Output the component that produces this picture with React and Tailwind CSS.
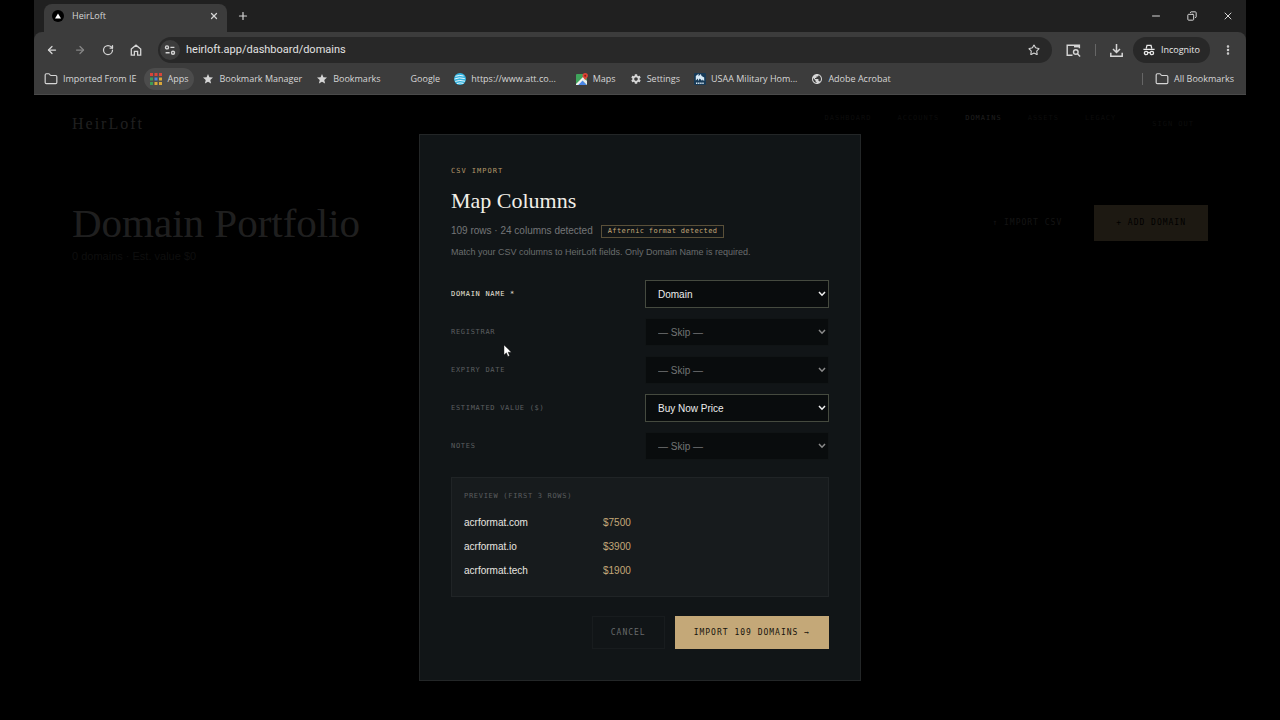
import React, { useState } from 'react';
import {
  ArrowLeft, ArrowRight, RotateCw, Star, Folder, Plus, X, Minus, EllipsisVertical, Copy
} from 'lucide-react';
import { MdStar, MdSettings, MdPublic } from 'react-icons/md';

const navLinks = ['Dashboard', 'Accounts', 'Domains', 'Assets', 'Legacy'];

const fields = [
  { id: 'domain', label: 'Domain Name *', value: 'Domain', required: true },
  { id: 'registrar', label: 'Registrar', value: '' },
  { id: 'expiry', label: 'Expiry Date', value: '' },
  { id: 'value', label: 'Estimated Value ($)', value: 'Buy Now Price' },
  { id: 'notes', label: 'Notes', value: '' }
];

const columns = ['Domain', 'Buy Now Price', 'Floor Price', 'Min Offer'];

const previewRows = [
  { domain: 'acrformat.com', price: '$7500' },
  { domain: 'acrformat.io', price: '$3900' },
  { domain: 'acrformat.tech', price: '$1900' }
];

function HomeIcon() {
  return (
    <svg viewBox="0 0 12 12" className="h-3 w-3" fill="none" stroke="currentColor" strokeWidth="1.3">
      <path d="M1.3 5 6 1.2 10.7 5v6.2H7.6V7.4H4.4v3.8H1.3Z" />
    </svg>
  );
}

function TuneIcon() {
  return (
    <svg viewBox="0 0 12 12" className="h-3 w-3" fill="none" stroke="currentColor" strokeWidth="1.4">
      <circle cx="3" cy="3.4" r="1.5" />
      <path d="M6.4 3.4h4M1.6 8.8h4" />
      <circle cx="9" cy="8.8" r="1.5" />
    </svg>
  );
}

function AppsIcon() {
  return (
    <svg viewBox="0 0 12 12" className="h-3 w-3">
      <path fill="#d9453a" d="M0 0h3v3H0zM4.5 0h3v3h-3zM9 0h3v3H9z" />
      <path fill="#3c9b58" d="M0 4.5h3v3H0zM0 9h3v3H0z" />
      <path fill="#4a85dd" d="M4.5 4.5h3v3h-3z" />
      <path fill="#d9a73a" d="M9 4.5h3v3H9zM4.5 9h3v3h-3zM9 9h3v3H9z" />
    </svg>
  );
}

function AttIcon() {
  return (
    <svg viewBox="0 0 12 12" className="h-3 w-3">
      <circle cx="6" cy="6" r="6" fill="#35b4e0" />
      <path d="M1.4 3.3Q6 1.6 9.6 3M.6 6Q5 3.9 10.8 5.6M1.2 8.4Q5.4 6.6 11 8.2M3 10.5Q6 9.4 9.4 10.4" fill="none" stroke="#e6f7fd" strokeWidth="1" />
    </svg>
  );
}

function MapsIcon() {
  return (
    <svg viewBox="0 0 12 12" className="h-3 w-3">
      <rect y="1" width="11" height="11" rx="1" fill="#3fa45b" />
      <path d="M5.5 6.5 11 12H0Z" fill="#4a86e8" />
      <path d="M0 11 8 3l1.6 1.6L2.2 12H0Z" fill="#f1f1f1" />
      <path d="m6 7 5 5V8L8.4 5.4Z" fill="#e8eaed" />
      <path d="M9.2 0a2.7 2.7 0 0 1 2.7 2.7c0 1.8-2 2.4-2.7 4.6-.7-2.2-2.7-2.8-2.7-4.6A2.7 2.7 0 0 1 9.2 0Z" fill="#dd4335" />
      <circle cx="9.2" cy="2.7" r="1" fill="#8c1f17" />
    </svg>
  );
}

function UsaaIcon() {
  return (
    <svg viewBox="0 0 12 12" className="h-3 w-3">
      <rect width="12" height="12" rx="1" fill="#173a57" />
      <path d="M1.8 7.6V3L4.6.8v2.4L6.8 1l.8 2L10.2 4.6V8L8.2 6.4V8L5.8 5.4 4 8V5.6Z" fill="#d7e9f5" />
      <path d="M2 10.2h8" stroke="#d7e9f5" strokeWidth="1.4" strokeDasharray="1.4 .7" />
    </svg>
  );
}

function LensIcon() {
  return (
    <svg viewBox="0 0 15 13" className="h-[13px] w-[15px]" fill="none" stroke="currentColor" strokeWidth="1.4">
      <path d="M6.5 11.3H1.2V1.2h12.2v3" />
      <path d="M8 2.2h5.4" strokeWidth="2.4" />
      <circle cx="9.8" cy="8" r="2.3" />
      <path d="m11.5 9.8 2.6 2.6" />
    </svg>
  );
}

function DownloadIcon() {
  return (
    <svg viewBox="0 0 13 13" className="h-[13px] w-[13px]" fill="none" stroke="currentColor" strokeWidth="1.5">
      <path d="M6.5 0v8M3 5l3.5 3.5L10 5M.8 8.8v3.4h11.4V8.8" />
    </svg>
  );
}

function IncognitoIcon() {
  return (
    <svg viewBox="0 0 12 12" className="h-3 w-3" fill="none" stroke="currentColor" strokeWidth="1.3">
      <path d="M3.2 4.6 4 1.3h4l.8 3.3" />
      <path d="M.4 5.4h11.2" />
      <circle cx="3.1" cy="9" r="1.7" />
      <circle cx="8.9" cy="9" r="1.7" />
      <path d="M4.8 8.8q1.2-.8 2.4 0" />
    </svg>
  );
}

function Bookmark({ icon, label, className = '' }) {
  return (
    <a href="#" className={`flex h-[22px] flex-shrink-0 items-center gap-[5px] rounded-full ${className}`}>
      {icon}
      <span>{label}</span>
    </a>
  );
}

function BrowserChrome() {
  return (
    <header className="bg-[#202020] font-['Open_Sans','Noto_Sans',sans-serif] text-[#d6d6d6]">
      {/* Tab strip */}
      <div className="flex h-8 items-end justify-between pl-2.5">
        <div className="flex items-center gap-2.5">
          <div className="flex h-7 w-[183px] items-center gap-2 rounded-t-lg bg-[#3c3c3c] px-2 pb-1">
            <span className="flex h-3 w-3 items-center justify-center rounded-full bg-black">
              <svg viewBox="0 0 6 6" className="h-1.5 w-1.5" fill="#fff"><path d="M3 .5 6 5.5H0Z" /></svg>
            </span>
            <span className="flex-1 text-[9px]">HeirLoft</span>
            <button aria-label="Close tab"><X className="h-2.5 w-2.5" strokeWidth={3} /></button>
          </div>
          <button aria-label="New tab" className="pb-1"><Plus className="h-3 w-3" strokeWidth={2.4} /></button>
        </div>
        <div className="flex h-8 items-center gap-[25px] pr-3">
          <button aria-label="Minimize"><Minus className="h-3 w-3" strokeWidth={2} /></button>
          <button aria-label="Restore"><Copy className="h-2.5 w-2.5 -scale-x-100" strokeWidth={2.4} /></button>
          <button aria-label="Close window"><X className="h-3 w-3" strokeWidth={2} /></button>
        </div>
      </div>

      <div className="rounded-t-lg border-b border-[#4a4a4a] bg-[#3c3c3c]">
        {/* Address bar */}
        <div className="flex h-9 items-center px-3">
          <div className="flex items-center gap-4">
            <button aria-label="Back"><ArrowLeft className="h-3 w-3" strokeWidth={2.5} /></button>
            <button aria-label="Forward" className="text-[#858585]"><ArrowRight className="h-3 w-3" strokeWidth={2.5} /></button>
            <button aria-label="Reload"><RotateCw className="h-3 w-3" strokeWidth={2.5} /></button>
            <button aria-label="Home"><HomeIcon /></button>
          </div>
          <div className="ml-4 flex h-[26px] flex-1 items-center gap-1.5 rounded-full bg-[#282828] pl-0.5 pr-3">
            <span className="flex h-5 w-5 items-center justify-center rounded-full bg-[#3c3c3c]"><TuneIcon /></span>
            <input aria-label="Address" defaultValue="heirloft.app/dashboard/domains" className="min-w-0 flex-1 bg-transparent font-[Roboto,sans-serif] text-[11px] text-[#e2e2e2] outline-none" />
            <button aria-label="Bookmark this page"><Star className="h-3 w-3" strokeWidth={2.2} /></button>
          </div>
          <button aria-label="Search this page" className="ml-3.5"><LensIcon /></button>
          <span className="ml-3.5 h-3 w-px bg-[#666]" />
          <button aria-label="Downloads" className="ml-3.5"><DownloadIcon /></button>
          <button className="ml-2.5 flex h-[26px] items-center gap-1.5 rounded-full bg-[#282828] px-2.5 text-[9px] text-[#e8e8e8]">
            <IncognitoIcon />
            Incognito
          </button>
          <button aria-label="Menu" className="ml-3"><EllipsisVertical className="h-3 w-3" strokeWidth={3} /></button>
        </div>

        {/* Bookmarks */}
        <div className="flex h-[26px] items-start justify-between pl-2.5 pr-3 text-[9px]">
          <nav className="flex items-center">
            <Bookmark icon={<Folder className="h-3.5 w-3.5" />} label="Imported From IE" />
            <Bookmark icon={<AppsIcon />} label="Apps" className="ml-2 bg-[#4c4c4c] px-1.5" />
            <Bookmark icon={<MdStar className="h-3 w-3" />} label="Bookmark Manager" className="ml-2" />
            <Bookmark icon={<MdStar className="h-3 w-3" />} label="Bookmarks" className="ml-3.5" />
            <Bookmark icon={null} label="Google" className="ml-[30px]" />
            <Bookmark icon={<AttIcon />} label="https://www.att.co..." className="ml-3.5" />
            <Bookmark icon={<MapsIcon />} label="Maps" className="ml-5" />
            <Bookmark icon={<MdSettings className="h-3 w-3" />} label="Settings" className="ml-3.5" />
            <Bookmark icon={<UsaaIcon />} label="USAA Military Hom..." className="ml-3.5" />
            <Bookmark icon={<MdPublic className="h-3 w-3" />} label="Adobe Acrobat" className="ml-3.5" />
          </nav>
          <div className="flex h-[22px] items-center gap-3">
            <span className="h-3 w-px bg-[#666]" />
            <Bookmark icon={<Folder className="h-3.5 w-3.5" />} label="All Bookmarks" />
          </div>
        </div>
      </div>
    </header>
  );
}

function PortfolioPage() {
  return (
    <div className="px-[38px] pt-[15px]">
      <div className="flex items-start justify-between">
        <a href="#" className="pt-0.5 font-['Liberation_Serif',serif] text-base leading-6 tracking-[2px] text-[#d0d0d0]">HeirLoft</a>
        <nav className="flex gap-[26px] pr-3.5 font-['DejaVu_Sans_Mono',monospace] text-[7px] leading-4 tracking-[1px] text-[#505050]">
          {navLinks.map((link) => (
            <a key={link} href="#" className={link === 'Domains' ? 'uppercase text-[#c0c0c0]' : 'uppercase'}>
              {link}
            </a>
          ))}
          <button className="ml-2.5 pt-1.5 uppercase">Sign Out</button>
        </nav>
      </div>
      <div className="mt-[62px] flex items-start justify-between">
        <div>
          <h1 className="font-['Liberation_Serif',serif] text-[41px] leading-[50px] text-[#d0d0d0]">Domain Portfolio</h1>
          <p className="font-['Liberation_Sans',sans-serif] text-[11px] leading-4 text-[#5c5c5c]">0 domains · Est. value $0</p>
        </div>
        <div className="mt-[7px] flex gap-2.5 font-['DejaVu_Sans_Mono',monospace] text-[8px] tracking-[1px]">
          <button className="px-[22px] py-3 text-[#808080]">↑ IMPORT CSV</button>
          <button className="bg-[#c4a878] px-[22px] py-3 text-black">+ ADD DOMAIN</button>
        </div>
      </div>
    </div>
  );
}

function FieldRow({ field, value, onChange }) {
  return (
    <div className="grid grid-cols-2 items-center gap-2.5">
      <label
        htmlFor={field.id}
        className={`font-['DejaVu_Sans_Mono',monospace] text-[7px] uppercase tracking-widest ${
          field.required ? 'text-[#e8e4dc]' : 'text-[#5c5f60]'
        }`}
      >
        {field.label}
      </label>
      <div className="relative">
        <select
          id={field.id}
          value={value}
          onChange={(e) => onChange(field.id, e.target.value)}
          className={`h-7 w-full appearance-none border bg-[#090c0d] px-3 text-[10px] outline-none ${
            value ? 'border-[#454a3f] text-[#ececec]' : 'border-[#101415] text-[#727475]'
          }`}
        >
          <option value="">— Skip —</option>
          {columns.map((col) => (
            <option key={col} value={col}>{col}</option>
          ))}
        </select>
        <svg
          viewBox="0 0 8 6"
          className={`pointer-events-none absolute right-[3px] top-[11px] h-1.5 w-2 ${value ? 'text-[#f0f0f0]' : 'text-[#8a8a8a]'}`}
          fill="none"
          stroke="currentColor"
          strokeWidth="1.5"
        >
          <path d="m1 1 3 3.2L7 1" />
        </svg>
      </div>
    </div>
  );
}

function MapColumnsModal() {
  const [mapping, setMapping] = useState(
    Object.fromEntries(fields.map((f) => [f.id, f.value]))
  );

  const handleChange = (id, value) => setMapping({ ...mapping, [id]: value });

  return (
    <div
      role="dialog"
      aria-labelledby="map-title"
      className="w-full max-w-[442px] border border-[#232627] bg-[#111517] px-[31px] pb-[31px] pt-8 font-['Liberation_Sans',Arial,sans-serif]"
    >
      <p className="font-['DejaVu_Sans_Mono',monospace] text-[7px] leading-2 tracking-[1px] text-[#b3976a]">CSV IMPORT</p>
      <h2 id="map-title" className="mt-3 font-['Liberation_Serif',serif] text-[22px] leading-7 text-[#f2efe8]">Map Columns</h2>
      <div className="mt-2 flex items-center gap-2 text-[10px] leading-4 text-[#747677]">
        <span>109 rows · 24 columns detected</span>
        <span className="border border-[#5a5039] px-1.5 font-['DejaVu_Sans_Mono',monospace] text-[7px] leading-[11px] tracking-wider text-[#c4a878]">
          Afternic format detected
        </span>
      </div>
      <p className="mt-[5px] text-[9px] leading-4 text-[#6a6d6e]">
        Match your CSV columns to HeirLoft fields. Only Domain Name is required.
      </p>

      <form className="mt-5 space-y-2.5">
        {fields.map((field) => (
          <FieldRow key={field.id} field={field} value={mapping[field.id]} onChange={handleChange} />
        ))}
      </form>

      {/* Preview */}
      <div className="mt-[17px] border border-[#202426] bg-[#171b1d] px-3 py-3.5">
        <p className="font-['DejaVu_Sans_Mono',monospace] text-[7px] leading-2 tracking-widest text-[#5a5d5e]">PREVIEW (FIRST 3 ROWS)</p>
        <table className="mt-2.5 w-full text-left text-[10px]">
          <tbody>
            {previewRows.map((row) => (
              <tr key={row.domain} className="h-6">
                <td className="w-[139px] text-[#e8e6e0]">{row.domain}</td>
                <td className="text-[#c4a878]">{row.price}</td>
              </tr>
            ))}
          </tbody>
        </table>
      </div>

      <div className="mt-[19px] flex justify-end gap-2.5 font-['DejaVu_Sans_Mono',monospace] text-[8px] tracking-[1px]">
        <button className="h-[33px] border border-[#181c1e] px-[18px] text-[#66696a]">CANCEL</button>
        <button className="h-[33px] bg-[#c4a878] px-[19px] text-[#16130c]">IMPORT 109 DOMAINS →</button>
      </div>
    </div>
  );
}

export default function App() {
  return (
    <div className="flex min-h-screen flex-col bg-black px-[34px]">
      <BrowserChrome />
      <main className="relative flex-1">
        <PortfolioPage />
        <div className="absolute inset-0 flex items-center justify-center bg-black/85">
          <MapColumnsModal />
        </div>
        {/* Pointer */}
        <svg viewBox="0 0 8 12" className="absolute left-[470px] top-[250px] h-3 w-2" fill="#fff" stroke="#000" strokeWidth=".4">
          <path d="M0 0v10l2.4-2.2 1.5 3.6 1.7-.7L4.1 7.2h3.3Z" />
        </svg>
      </main>
    </div>
  );
}
